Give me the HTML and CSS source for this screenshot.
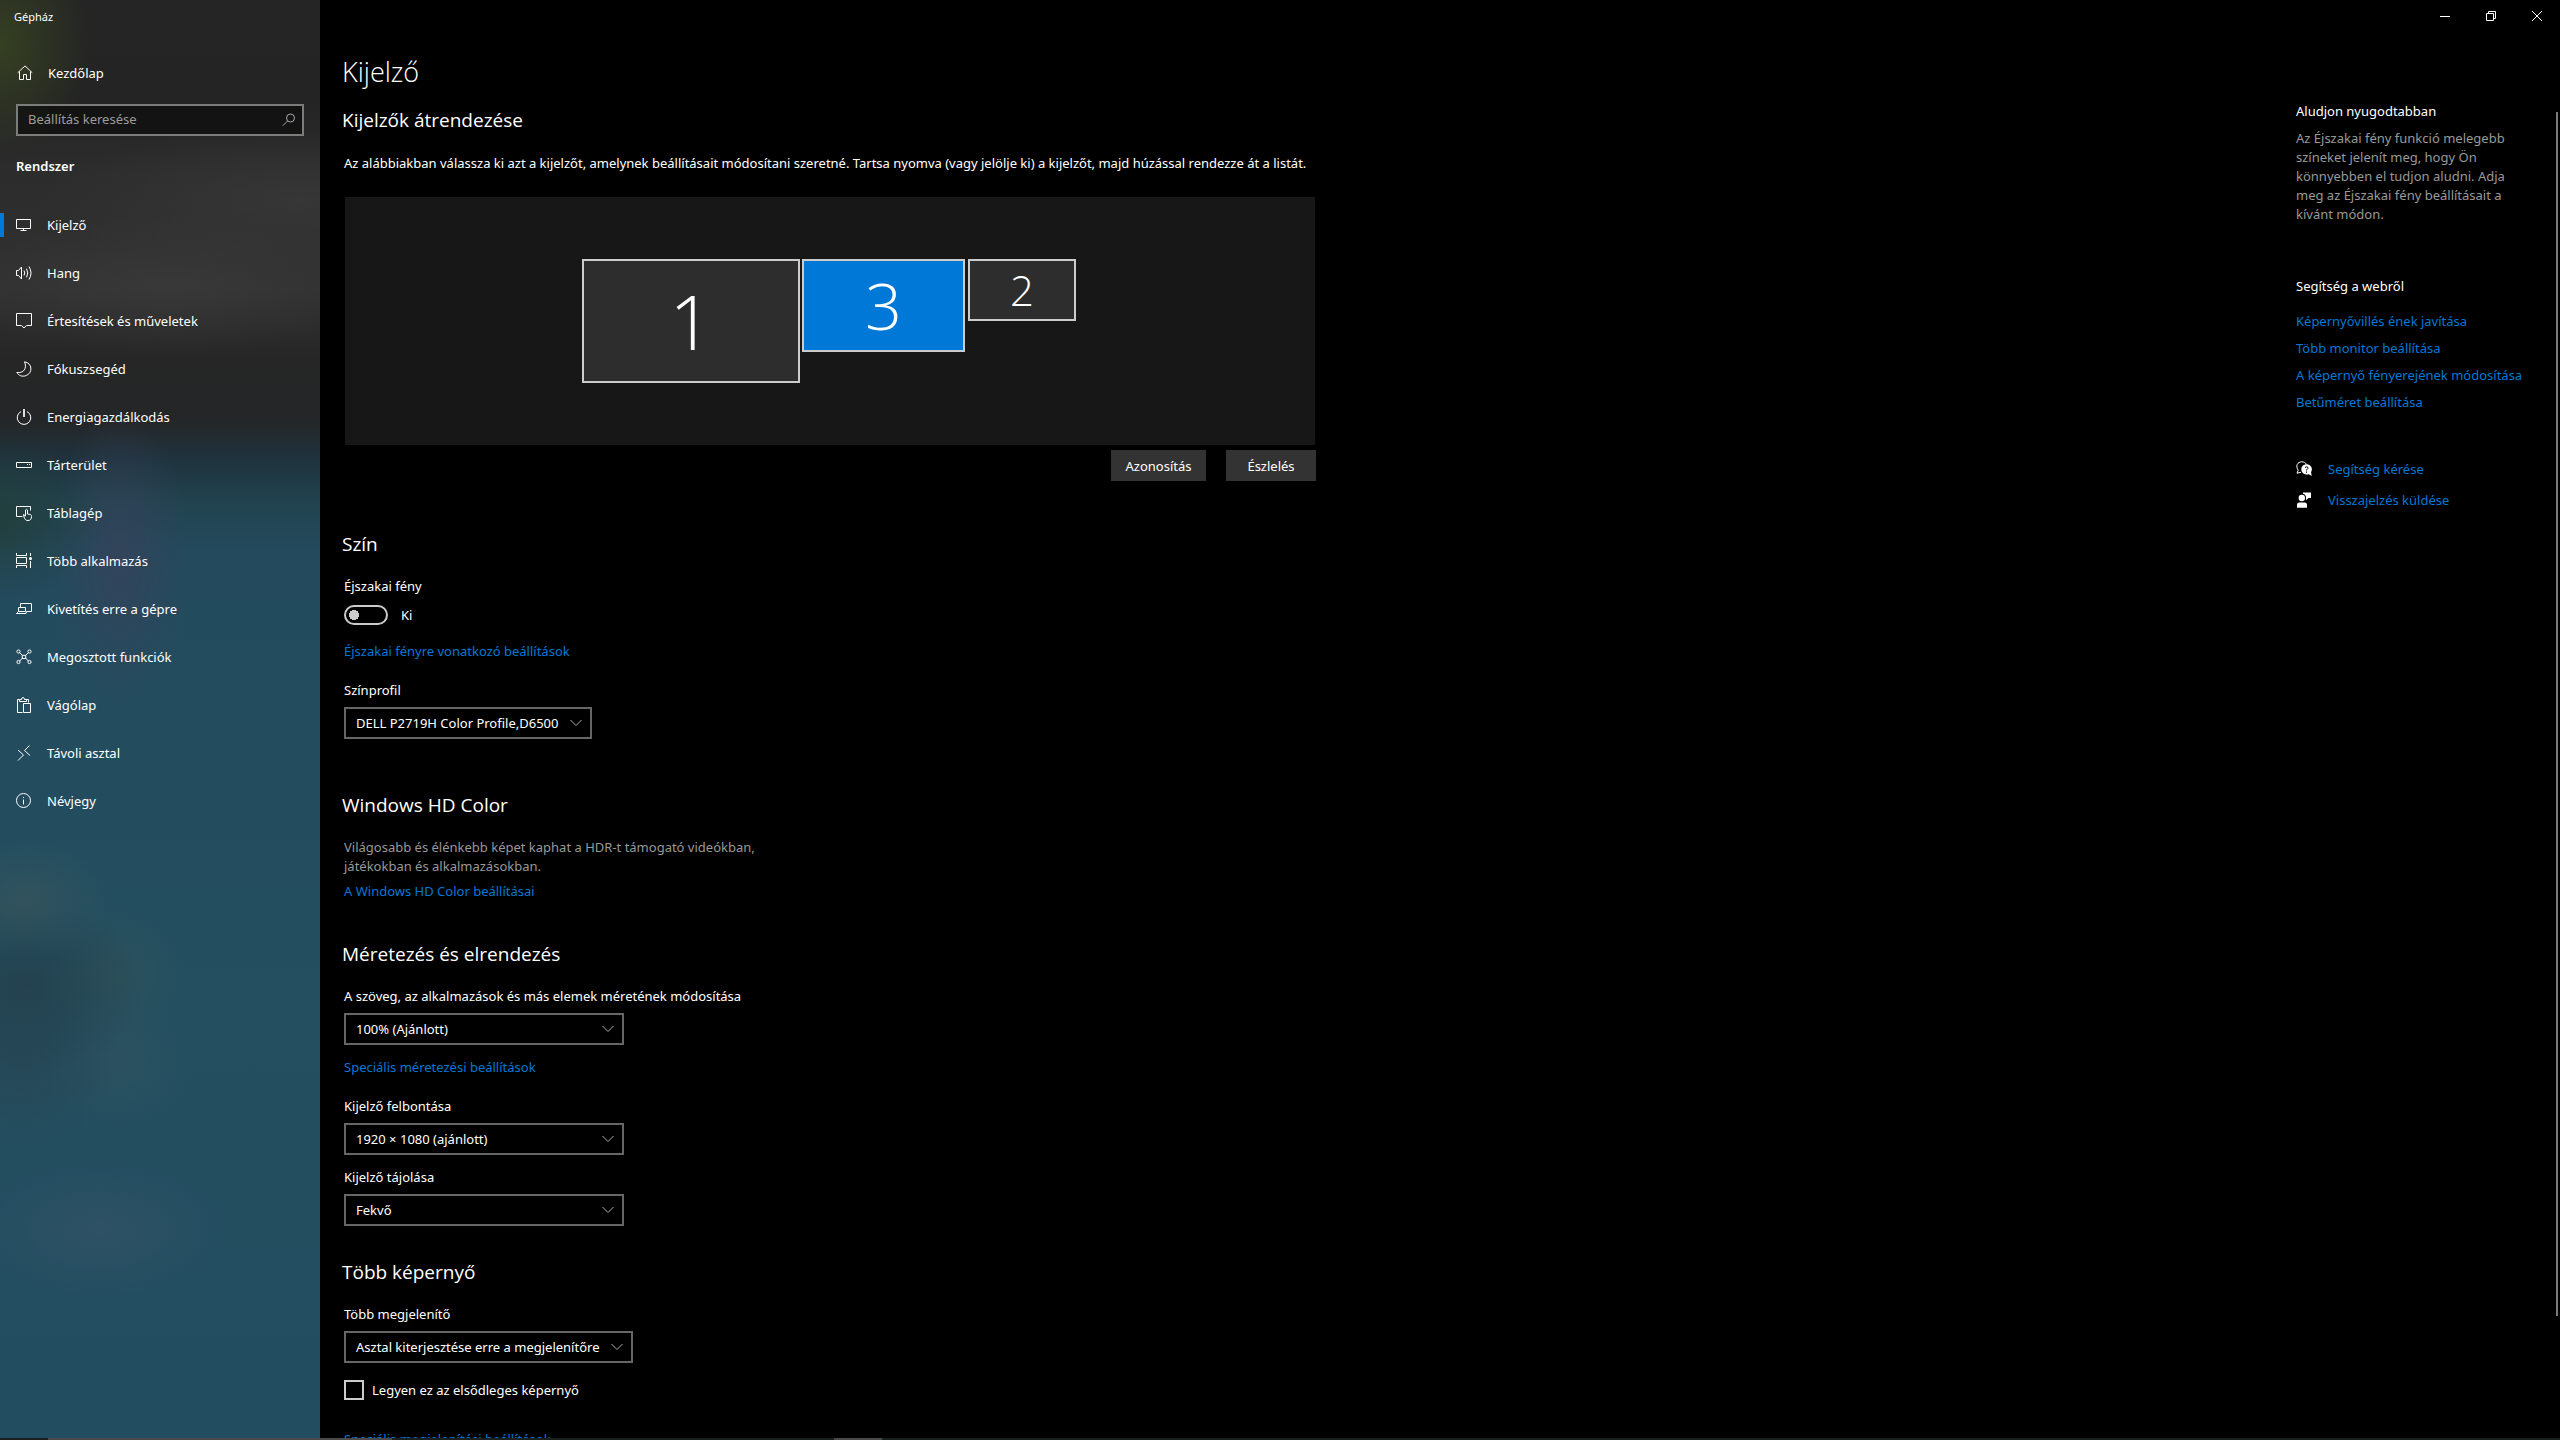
FILE: index.html
```html
<!DOCTYPE html>
<html lang="hu">
<head>
<meta charset="utf-8">
<title>Gépház</title>
<link rel="stylesheet" href="styles.css">
</head>
<body>
<div class="window">
  <aside class="sidebar">
    <div class="app-title">Gépház</div>
    <a class="home" href="#">
      <svg class="icon" viewBox="0 0 16 16"><path d="M.7 7.800 8 .9l7.300 6.900M2.500 6.500v8h4v-5h3v5h4v-8"/></svg>
      <span>Kezdőlap</span>
    </a>
    <div class="search">
      <input type="text" placeholder="Beállítás keresése" aria-label="Beállítás keresése">
      <svg class="search-icon" viewBox="0 0 14 14"><circle cx="8.500" cy="5" r="4"/><path d="M5.600 7.900.8 12.700"/></svg>
    </div>
    <h2 class="group">Rendszer</h2>
    <nav class="nav">
      <a class="nav-item active" href="#"><svg class="icon" viewBox="0 0 16 16"><path d="M.5 2.500h14v9H.5zM7.500 11.500v2M4.500 13.500h6"/></svg><span>Kijelző</span></a>
      <a class="nav-item" href="#"><svg class="icon" viewBox="0 0 16 16"><path d="M.5 5.500h2l3-3.500v12l-3-3.500h-2zM8 5.500q1.500 2.500 0 5M10.500 3.700q2.600 4.300 0 8.600M13 1.500q4 6.500 0 13"/></svg><span>Hang</span></a>
      <a class="nav-item" href="#"><svg class="icon" viewBox="0 0 16 16"><path d="M.5.5h15v12h-5L8 15l-2.500-2.500h-5z"/></svg><span>Értesítések és műveletek</span></a>
      <a class="nav-item" href="#"><svg class="icon" viewBox="0 0 16 16"><path d="M8.500.8c8 1.200 8.500 11 1.700 13.800-4 1.500-7.700-.1-9.400-3.100 7 1 10.500-4.500 7.700-10.700z"/></svg><span>Fókuszsegéd</span></a>
      <a class="nav-item" href="#"><svg class="icon" viewBox="0 0 16 16"><path d="M5 2.500a6.800 6.800 0 1 0 6 0"/><path class="thick" d="M8 0v8"/></svg><span>Energiagazdálkodás</span></a>
      <a class="nav-item" href="#"><svg class="icon" viewBox="0 0 16 16"><path d="M.5 5.500h15v5H.5zM11 7.500h1M13 7.500h1"/></svg><span>Tárterület</span></a>
      <a class="nav-item" href="#"><svg class="icon" viewBox="0 0 16 16"><path d="M6.500 11.500h-6v-10h14v4M7.500 9.500l2 1.500V5q1-1.500 2 0v4l3 .5q1 .5 1 2c0 2.500-1 4-3.500 4s-3-1-4-3.500z"/></svg><span>Táblagép</span></a>
      <a class="nav-item" href="#"><svg class="icon" viewBox="0 0 16 16"><path d="M.5 0v2.500h10V0M.5 4.500h10v6H.5zM.5 15v-2.500h10V15M14.500 0v3M14.500 8v7"/><circle class="solid" cx="14.500" cy="5.500" r="1.500"/></svg><span>Több alkalmazás</span></a>
      <a class="nav-item" href="#"><svg class="icon" viewBox="0 0 16 16"><path d="M4.500 6V2.500h11v8h-5M2.500 6.500h7v4h-7zM2.500 10.500l-2 2h9.500l.5-2"/></svg><span>Kivetítés erre a gépre</span></a>
      <a class="nav-item" href="#"><svg class="icon" viewBox="0 0 16 16"><circle cx="2.500" cy="2.500" r="1.600"/><circle cx="13.500" cy="2.500" r="1.600"/><circle cx="2.500" cy="13" r="1.600"/><circle cx="13.500" cy="13" r="1.600"/><path d="M3.600 3.600 6.500 6.500M12.400 3.600 9.500 6.500M3.600 12l2.900-3M12.400 12 9.500 9M6.300 6.300h3.400v3.200H6.300z"/></svg><span>Megosztott funkciók</span></a>
      <a class="nav-item" href="#"><svg class="icon" viewBox="0 0 16 16"><path d="M6.500 15.500h-5v-13h2M10.500 2.500h2v3M3.500 4.500v-2h2q0-2 1.500-2t1.500 2h2v2zM7.500 6.500h7v9h-7z"/></svg><span>Vágólap</span></a>
      <a class="nav-item" href="#"><svg class="icon" viewBox="0 0 16 16"><path d="m2 5 5.500 5L2 15.500M13.500.5 8.500 5.500l5.500 5"/></svg><span>Távoli asztal</span></a>
      <a class="nav-item" href="#"><svg class="icon" viewBox="0 0 16 16"><circle cx="7.500" cy="7.500" r="7"/><path d="M7.500 6.500v5M7.500 4v1"/></svg><span>Névjegy</span></a>
    </nav>
  </aside>

  <main class="content">
    <h1>Kijelző</h1>
    <section class="arrange">
      <h2>Kijelzők átrendezése</h2>
      <p class="intro">Az alábbiakban válassza ki azt a kijelzőt, amelynek beállításait módosítani szeretné. Tartsa nyomva (vagy jelölje ki) a kijelzőt, majd húzással rendezze át a listát.</p>
      <div class="canvas">
        <button class="monitor monitor-1" type="button">1</button>
        <button class="monitor monitor-3" type="button">3</button>
        <button class="monitor monitor-2" type="button">2</button>
      </div>
      <div class="actions">
        <button class="btn" type="button">Azonosítás</button>
        <button class="btn btn-detect" type="button">Észlelés</button>
      </div>
    </section>

    <section class="color">
      <h2>Szín</h2>
      <label class="label" for="night">Éjszakai fény</label>
      <div class="toggle-row"><input class="toggle" id="night" type="checkbox" role="switch"><span>Ki</span></div>
      <a class="link link-night" href="#">Éjszakai fényre vonatkozó beállítások</a>
      <label class="label" for="profile">Színprofil</label>
      <div class="select select-profile">
        <select id="profile"><option>DELL P2719H Color Profile,D6500</option></select>
        <svg class="chevron" viewBox="0 0 12 8"><path d="m.5 1 5.500 5.500L11.500 1"/></svg>
      </div>
    </section>

    <section class="hd">
      <h2>Windows HD Color</h2>
      <p class="muted">Világosabb és élénkebb képet kaphat a HDR-t támogató videókban, játékokban és alkalmazásokban.</p>
      <a class="link" href="#">A Windows HD Color beállításai</a>
    </section>

    <section class="scale">
      <h2>Méretezés és elrendezés</h2>
      <label class="label" for="scale">A szöveg, az alkalmazások és más elemek méretének módosítása</label>
      <div class="select">
        <select id="scale"><option>100% (Ajánlott)</option></select>
        <svg class="chevron" viewBox="0 0 12 8"><path d="m.5 1 5.500 5.500L11.500 1"/></svg>
      </div>
      <a class="link link-scale" href="#">Speciális méretezési beállítások</a>
      <label class="label" for="resolution">Kijelző felbontása</label>
      <div class="select">
        <select id="resolution"><option>1920 × 1080 (ajánlott)</option></select>
        <svg class="chevron" viewBox="0 0 12 8"><path d="m.5 1 5.500 5.500L11.500 1"/></svg>
      </div>
      <label class="label label-next" for="orientation">Kijelző tájolása</label>
      <div class="select">
        <select id="orientation"><option>Fekvő</option></select>
        <svg class="chevron" viewBox="0 0 12 8"><path d="m.5 1 5.500 5.500L11.500 1"/></svg>
      </div>
    </section>

    <section class="multi">
      <h2>Több képernyő</h2>
      <label class="label" for="multiple">Több megjelenítő</label>
      <div class="select select-multi">
        <select id="multiple"><option>Asztal kiterjesztése erre a megjelenítőre</option></select>
        <svg class="chevron" viewBox="0 0 12 8"><path d="m.5 1 5.500 5.500L11.500 1"/></svg>
      </div>
      <label class="check"><input type="checkbox"><span>Legyen ez az elsődleges képernyő</span></label>
      <a class="link link-advanced" href="#">Speciális megjelenítési beállítások</a>
    </section>
  </main>

  <aside class="side">
    <div class="captions">
      <button type="button" aria-label="Kis méret"><svg viewBox="0 0 10 10"><path d="M0 5.500h10"/></svg></button>
      <button type="button" aria-label="Előző méret"><svg viewBox="0 0 10 10"><path d="M.5 2.500h7v7h-7zM2.500 2.500v-2h7v7h-2"/></svg></button>
      <button type="button" aria-label="Bezárás"><svg viewBox="0 0 10 10"><path d="m0 0 10 10M10 0 0 10"/></svg></button>
    </div>
    <div class="help">
      <h3>Aludjon nyugodtabban</h3>
      <p class="muted">Az Éjszakai fény funkció melegebb színeket jelenít meg, hogy Ön könnyebben el tudjon aludni. Adja meg az Éjszakai fény beállításait a kívánt módon.</p>
      <h3 class="web">Segítség a webről</h3>
      <ul class="web-links">
        <li><a class="link" href="#">Képernyővillés ének javítása</a></li>
        <li><a class="link" href="#">Több monitor beállítása</a></li>
        <li><a class="link" href="#">A képernyő fényerejének módosítása</a></li>
        <li><a class="link" href="#">Betűméret beállítása</a></li>
      </ul>
      <ul class="support">
        <li><svg class="icon" viewBox="0 0 16 16"><path d="M5 11.300 1 12.200l1.200-3C-.8 5 1.500.8 5.800.8c2 0 3.700.9 4.700 2.400"/><path class="solid" d="M10.600 3.300c3 0 5.300 2.200 5.300 5 0 1.200-.4 2-.9 2.700l.7 4-2.900-1.700c-4 1-7.500-1.300-7.500-5 0-2.800 2.300-5 5.300-5z"/><path class="hole" d="M9 6.600q1.500-1.500 2.800-.3c1 1.500-1.300 1.500-1.300 3.200M10.500 10.500v1.200"/></svg><a class="link" href="#">Segítség kérése</a></li>
        <li><svg class="icon" viewBox="0 0 16 16"><circle class="solid" cx="5.800" cy="6" r="3.200"/><path class="solid" d="M1 15.800V13q0-2.500 2.500-2.500H8.500q2.500 0 2.500 2.500v2.800zM7 .5h8v5.500h-2.500L10 8.200V4.500Q9 2 7 1.800z"/></svg><a class="link" href="#">Visszajelzés küldése</a></li>
      </ul>
    </div>
  </aside>
  <div class="scroll-thumb"></div>
  <div class="taskbar"><i class="task-search"></i><i class="task-active"></i></div>
</div>
</body>
</html>
```
FILE: styles.css
```css
* { box-sizing: border-box; }

body {
  margin: 0;
  background: #000;
  color: #fff;
  font: 13px/18px "Noto Sans", "Open Sans", sans-serif;
}

h1, h2, h3, p, ul { margin: 0; padding: 0; font-weight: 400; }
ul { list-style: none; }
a { text-decoration: none; color: inherit; }
button, input, select { font: inherit; color: inherit; margin: 0; }
svg { display: block; fill: none; stroke: currentColor; }

.window {
  position: relative;
  display: grid;
  grid-template-columns: 320px minmax(0, 1fr) 264px;
  height: 100vh;
  overflow: hidden;
}

/* Sidebar */
.sidebar {
  background:
    radial-gradient(ellipse 90px 110px at 0 45px, #354022 0, rgba(53, 64, 34, 0) 100%),
    radial-gradient(ellipse 260px 70px at 300px 200px, rgba(60, 60, 60, .6), rgba(60, 60, 60, 0)),
    radial-gradient(ellipse 240px 70px at 170px 285px, rgba(62, 62, 62, .6), rgba(62, 62, 62, 0)),
    radial-gradient(ellipse 100px 80px at 0 520px, rgba(34, 62, 58, .9), rgba(34, 62, 58, 0)),
    radial-gradient(ellipse 70px 150px at 120px 560px, rgba(54, 66, 90, .8), rgba(54, 66, 90, 0)),
    radial-gradient(ellipse 90px 60px at 25px 900px, rgba(54, 84, 92, .8), rgba(54, 84, 92, 0)),
    radial-gradient(ellipse 120px 90px at 25px 985px, rgba(36, 64, 76, .9), rgba(36, 64, 76, 0)),
    radial-gradient(ellipse 70px 70px at 115px 975px, rgba(48, 82, 90, .8), rgba(48, 82, 90, 0)),
    radial-gradient(ellipse 100px 90px at 20px 1060px, rgba(40, 70, 84, .8), rgba(40, 70, 84, 0)),
    radial-gradient(ellipse 80px 70px at 115px 1060px, rgba(46, 82, 96, .8), rgba(46, 82, 96, 0)),
    radial-gradient(ellipse 130px 70px at 100px 1230px, rgba(50, 82, 102, .8), rgba(50, 82, 102, 0)),
    linear-gradient(#252525 0, #242424 100px, #2c2c2c 170px, #303030 290px, #262626 360px, #242627 420px, #1f333e 460px, #21424e 500px, #234a5d 550px, #234c5e 700px, #234f60 1000px, #224d60 1440px);
}
.app-title { padding: 8px 14px 0; font-size: 11px; line-height: 18px; }
.home { display: flex; align-items: center; gap: 15px; margin-top: 37px; padding-left: 17px; height: 20px; }
.icon { width: 16px; height: 16px; flex: none; }
.solid { fill: currentColor; stroke: none; }
.hole { stroke: #000; }
.thick { stroke-width: 2; stroke: #ddd; }
.search { position: relative; margin: 21px 16px 0; }
.search input {
  display: block;
  width: 100%;
  height: 32px;
  padding: 0 34px 2px 10px;
  background: rgba(0, 0, 0, .5);
  border: 2px solid #7c7c7a;
  border-radius: 0;
}
.search input::placeholder { color: #9c9c9a; opacity: 1; }
.search-icon { position: absolute; right: 8px; top: 9px; width: 14px; height: 14px; color: #a8a8a6; }
.group { margin: 20px 16px 0; font-size: 13px; font-weight: 600; line-height: 20px; }
.nav { margin-top: 25px; }
.nav-item { display: flex; align-items: center; gap: 15px; height: 48px; padding-left: 16px; position: relative; }
.nav-item.active::before { content: ""; position: absolute; left: 0; top: 12px; width: 4px; height: 24px; background: #0078d7; }

/* Main column */
.content { padding: 53px 0 0 22px; }
.content h1 { font-family: "Open Sans", sans-serif; font-size: 27px; font-weight: 300; line-height: 38px; }
.content h2 { font-family: "Open Sans", sans-serif; font-size: 19px; line-height: 28px; }
.content section { width: 974px; padding-left: 2px; }
.content section h2 { margin-left: -2px; }
.arrange { padding-top: 15px; }
.intro { margin-top: 20px; white-space: nowrap; }
.canvas { position: relative; height: 248px; margin: 25px 1px 0; background: #171717; }
.monitor { position: absolute; top: 62px; padding: 0; border: 2px solid #ccc; background: #2d2d2d; font-family: "Open Sans", sans-serif; font-weight: 300; }
.monitor-1 { left: 237px; width: 218px; height: 124px; font-size: 76px; line-height: 116px; }
.monitor-3 { left: 457px; width: 163px; height: 93px; font-size: 64px; line-height: 84px; background: #0078d7; }
.monitor-2 { left: 623px; width: 108px; height: 62px; font-size: 42px; line-height: 56px; }
.actions { display: flex; justify-content: flex-end; gap: 20px; margin-top: 5px; }
.btn { min-width: 95px; height: 31px; padding: 0 12px; border: 0; background: #333; }
.btn-detect { min-width: 90px; }
.label { display: block; margin-top: 19px; }
.color { padding-top: 49px; }
.toggle-row { display: flex; align-items: center; gap: 13px; height: 20px; margin-top: 10px; }
.toggle {
  appearance: none;
  width: 44px;
  height: 20px;
  border: 2px solid #ccc;
  border-radius: 10px;
  background: radial-gradient(circle at 8px 8px, #ccc 5px, transparent 5px);
}
.link { color: #0078d7; }
.content .link { display: block; }
.link-night { margin-top: 17px; }
.link-night + .label { margin-top: 21px; }
.select { position: relative; width: 280px; margin-top: 8px; }
.select select {
  display: block;
  appearance: none;
  width: 100%;
  height: 32px;
  padding: 0 30px 0 10px;
  border: 2px solid #666;
  border-radius: 0;
  background: #000;
}
.chevron { position: absolute; right: 10px; top: 12px; width: 12px; height: 8px; color: #aaa; }
.select-profile { width: 248px; }
.select-multi { width: 289px; }
.hd { padding-top: 52px; }
.hd .muted { width: 430px; margin-top: 19px; }
.muted { color: #999; line-height: 19px; }
.hd .link { margin-top: 6px; }
.scale { padding-top: 40px; }
.link-scale { margin-top: 13px; }
.link-scale + .label { margin-top: 21px; }
.label-next { margin-top: 13px; }
.multi { padding-top: 32px; }
.check { display: flex; align-items: center; gap: 8px; margin-top: 17px; }
.check input { appearance: none; width: 20px; height: 20px; border: 2px solid #ccc; }
.link-advanced { margin-top: 30px; white-space: nowrap; }

/* Right column */
.captions { display: flex; justify-content: flex-end; height: 32px; }
.captions button { display: grid; place-items: center; width: 46px; padding: 0; border: 0; background: none; }
.captions svg { width: 10px; height: 10px; }
.help { padding-top: 70px; }
.help .muted { width: 226px; margin-top: 9px; }
.help h3 { font-size: 13px; line-height: 18px; }
.help .web { margin-top: 53px; }
.web-links { display: grid; gap: 9px; margin-top: 17px; white-space: nowrap; }
.support { display: grid; gap: 13px; margin-top: 49px; }
.support li { display: flex; align-items: center; gap: 16px; }

.scroll-thumb { position: absolute; right: 2px; top: 112px; bottom: 124px; width: 2px; background: #7a7a7a; }

/* Sliver of the taskbar under the window */
.taskbar { position: absolute; left: 0; right: 0; bottom: 0; height: 2px; background: #1a1f20; }
.taskbar i { position: absolute; top: 0; height: 2px; background: #4a4a4a; }
.task-search { left: 48px; width: 344px; }
.task-active { left: 834px; width: 48px; }
```
